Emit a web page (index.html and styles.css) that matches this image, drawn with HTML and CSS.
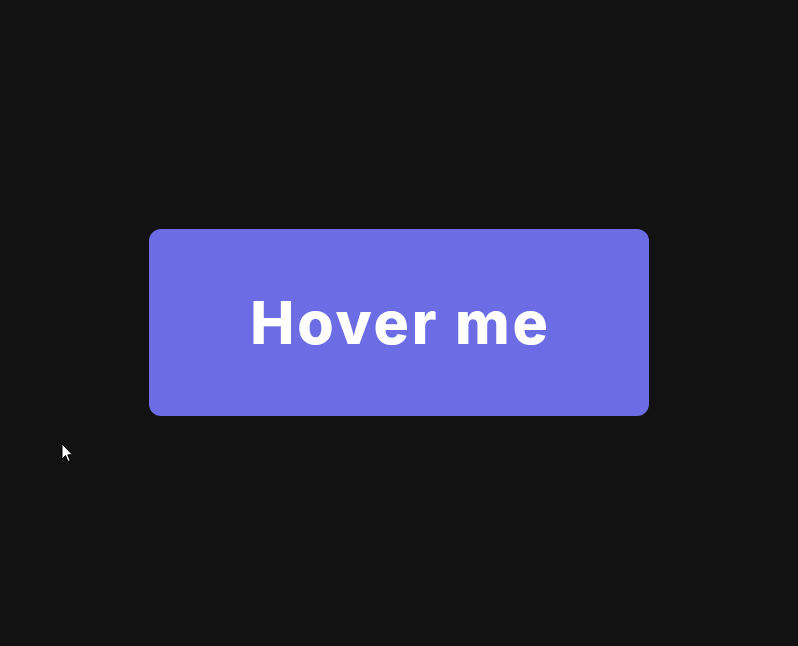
FILE: index.html
```html
<!DOCTYPE html>
<html lang="en">
<head>
<meta charset="utf-8">
<title>Hover me</title>
<link rel="stylesheet" href="styles.css">
</head>
<body>
<main class="stage">
  <button class="hover-btn" type="button">Hover me</button>
</main>
<svg class="cursor" width="14" height="22" viewBox="0 0 14 22" aria-hidden="true">
  <path d="M1 1 L1 16 L4.5 12.5 L7 18.5 L9.2 17.6 L6.8 11.8 L11.5 11.8 Z" fill="#fff" stroke="#000" stroke-width="1" stroke-linejoin="miter"/>
</svg>
</body>
</html>
```

FILE: styles.css
```css
html, body {
  margin: 0;
  padding: 0;
  background: #121212;
}
.stage {
  min-height: 100vh;
  display: flex;
  align-items: center;
  justify-content: center;
  padding-bottom: 1px;
  box-sizing: border-box;
}
.hover-btn {
  width: 500px;
  height: 187px;
  border: none;
  border-radius: 12px;
  background: #6c6ce4;
  color: #fff;
  font-family: "Inter", "Noto Sans", sans-serif;
  font-weight: 800;
  font-size: 59px;
  letter-spacing: 2.8px;
  padding: 0 0 0 3px;
  cursor: pointer;
}
.cursor {
  position: absolute;
  left: 61px;
  top: 443px;
}
```
